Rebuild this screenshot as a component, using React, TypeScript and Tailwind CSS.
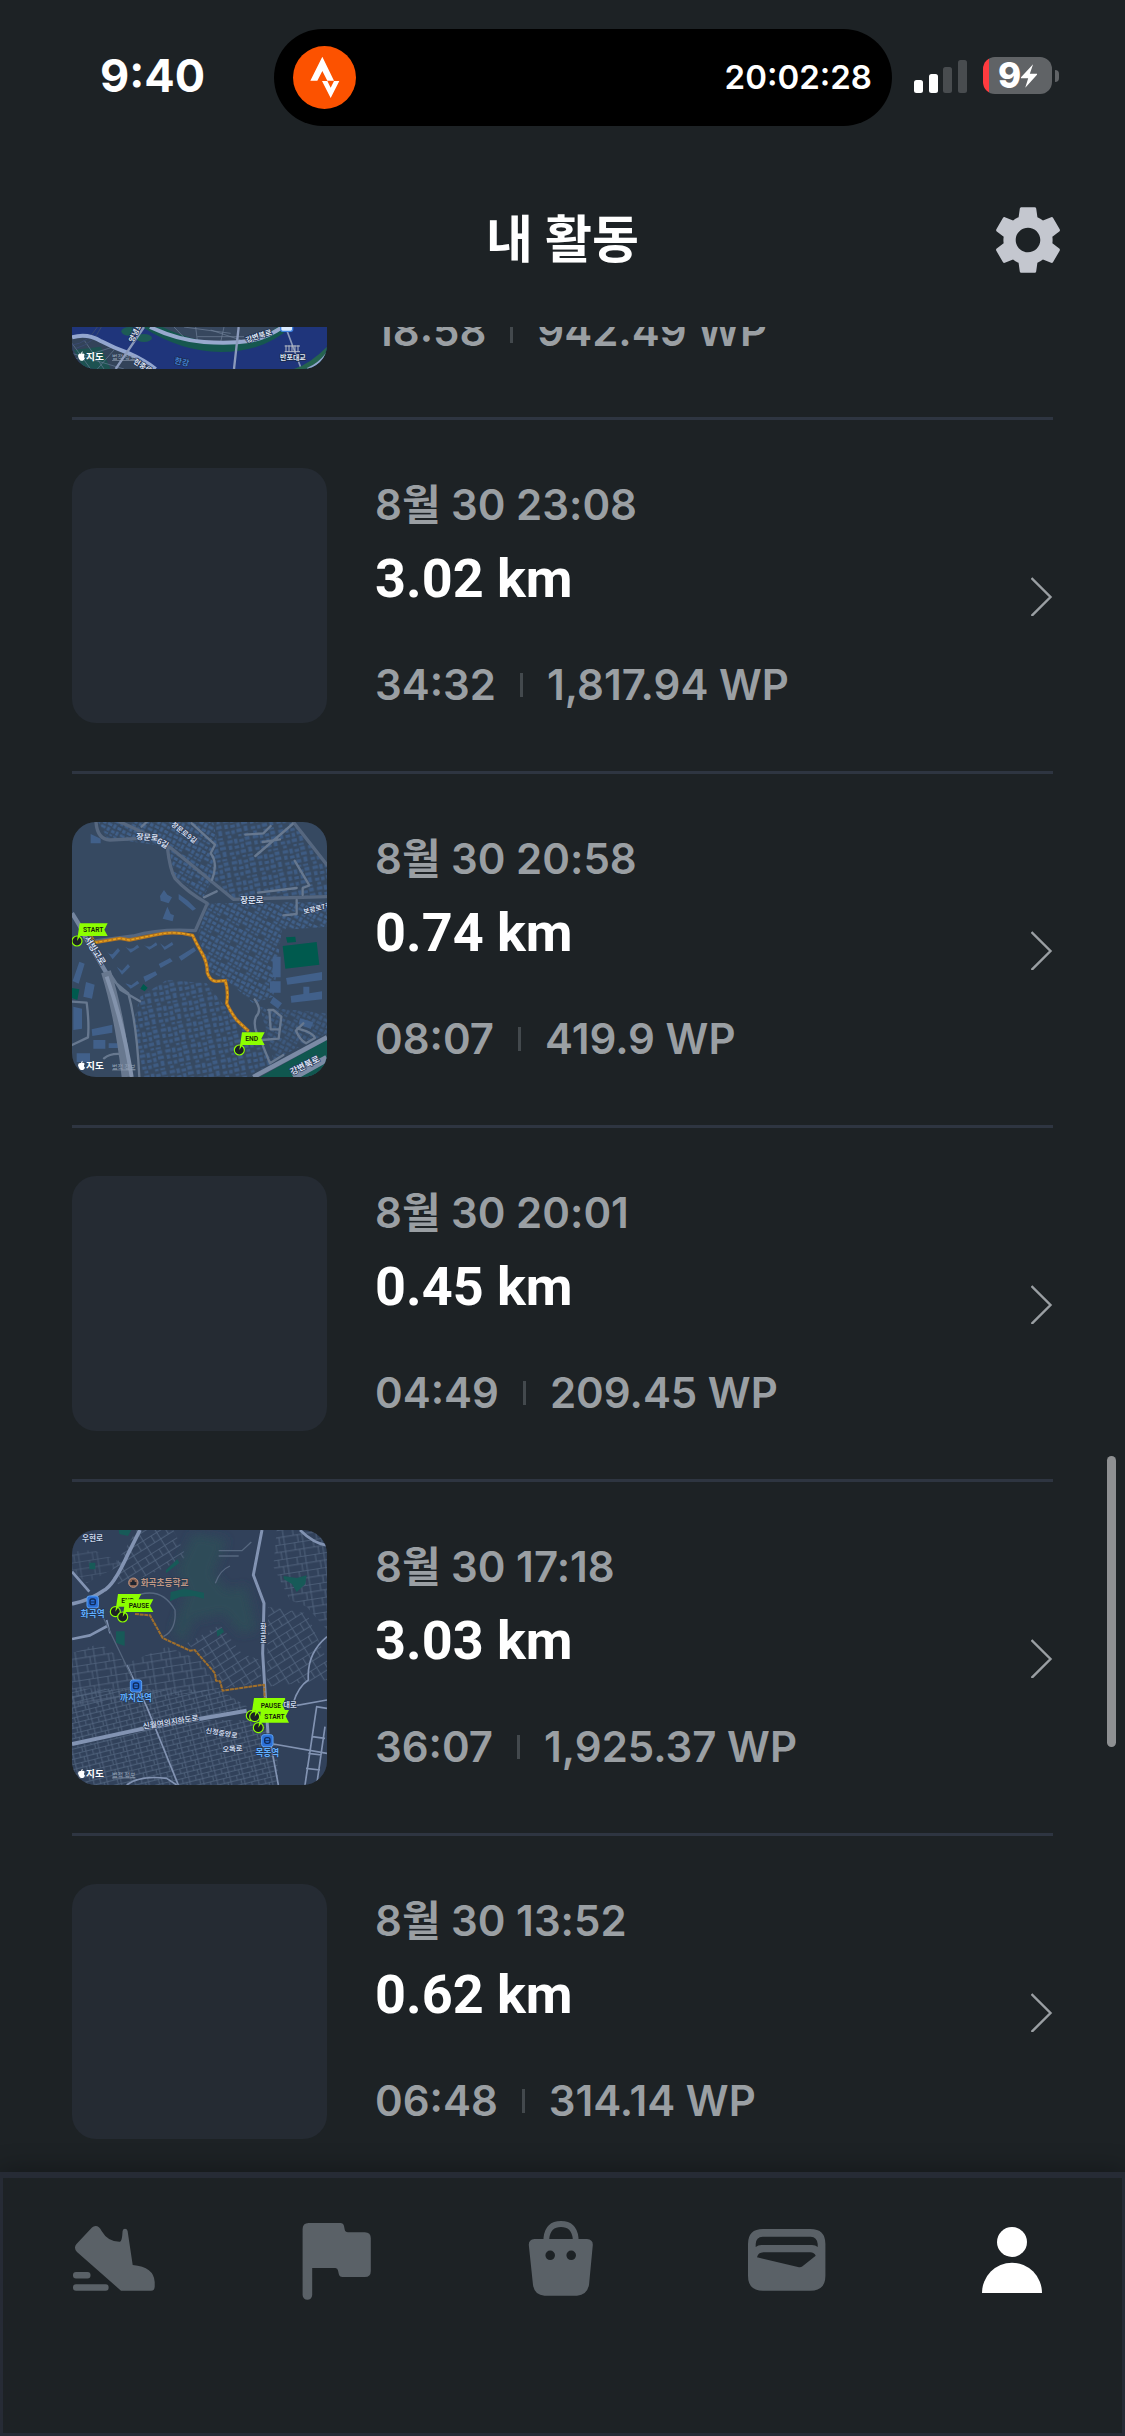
import { useLayoutEffect, useRef } from 'react'
import type { ReactNode } from 'react'
import { MdSettings } from 'react-icons/md'

type Activity = {
    date: string
    distance: string
    time: string
    points: string
    map?: ReactNode
}

const MAP_FONT = '"Noto Sans CJK KR", sans-serif'

const MapCredit = ({ x, y }: { x: number; y: number }) => (
    <g fill="#fff">
        <path d={`M${x} ${y - 10} q1 -9 9 -7 q1 -6 5 -7 q0 5 -3 7 q7 -2 9 3 q-5 6 1 11 q-4 9 -9 7 q-8 2 -12 -14Z`} />
        <text x={x + 24} y={y + 2} fontSize="29" fontWeight="700" fontFamily={MAP_FONT}>지도</text>
        <text x={x + 102} y={y} fontSize="18" fill="#93a1b5" textDecoration="underline" fontFamily={MAP_FONT}>법적 정보</text>
    </g>
)

const Flag = ({ x, y, label, width = 84 }: { x: number; y: number; label: string; width?: number }) => (
    <g>
        <circle cx={x} cy={y} r="15" fill="#1d2125" stroke="#8cff00" strokeWidth="3.5" />
        <path
            d={`M${x} ${y} L${x + 8} ${y - 53} h${width} l-10 19 l10 19 h${-width + 2} L${x} ${y}Z`}
            fill="#8cff00"
        />
        <text x={x + 18} y={y - 27} fontSize="20" fontWeight="600" fill="#16230a" fontFamily="Roboto, sans-serif">
            {label}
        </text>
    </g>
)

const Station = ({ x, y, label }: { x: number; y: number; label: string }) => (
    <g>
        <rect x={x - 17} y={y - 18} width="34" height="36" rx="7" fill="#2b6fd6" stroke="#5ba2f5" strokeWidth="3" />
        <rect x={x - 8} y={y - 9} width="16" height="17" rx="6" fill="none" stroke="#0f2c5c" strokeWidth="4" />
        <path d={`M${x - 8} ${y} h16`} stroke="#0f2c5c" strokeWidth="3" />
        <text
            x={x}
            y={y + 45}
            fontSize="26"
            fontWeight="700"
            textAnchor="middle"
            fill="#62b0ff"
            stroke="#1c3150"
            strokeWidth="3"
            paintOrder="stroke"
            fontFamily={MAP_FONT}
        >
            {label}
        </text>
    </g>
)

const RiverMap = () => (
    <svg viewBox="24 -618 765 765" className="size-full" aria-hidden="true">
        <rect x="24" y="-618" width="765" height="765" fill="#1f357b" />
        <path d="M24 50 Q70 42 110 66 L190 100 L275 147 H24Z" fill="#334359" />
        <path d="M30 90 L110 80 L140 147 H60Z" fill="#14594f" opacity=".7" />
        <path d="M24 70 L80 147 M24 120 L150 80 M60 60 L120 147 M24 100 L180 147 M100 147 L150 90" stroke="#667a96" strokeWidth="2" />
        <path d="M24 75 Q70 70 100 21 M36 85 Q90 70 112 21" stroke="#3a4a70" strokeWidth="3" fill="none" />
        <path d="M235 21 Q350 95 470 96 Q600 96 680 21 Z" fill="#16574f" />
        <path d="M295 21 Q390 66 470 68 Q580 66 640 21Z" fill="#37475e" />
        <path d="M330 21 L360 52 M360 21 L500 40 M395 21 L400 62 M440 30 L530 60 M480 21 L470 66 M400 50 H540" stroke="#73839b" strokeWidth="2" />
        <path d="M258 21 Q340 60 420 66 Q500 72 560 62 Q610 52 655 21" stroke="#98a9ce" strokeWidth="12" fill="none" />
        <ellipse cx="196" cy="34" rx="24" ry="13" fill="#1d5b55" />
        <ellipse cx="240" cy="54" rx="24" ry="12" fill="#1d5b55" />
        <path d="M24 52 Q70 38 112 64 Q150 84 190 98 Q240 120 275 147" stroke="#93a6cf" strokeWidth="12" fill="none" />
        <path d="M155 147 L240 21 M510 147 L524 21" stroke="#8b9abb" strokeWidth="7" />
        <path d="M668 30 L712 147" stroke="#8b9abb" strokeWidth="5" />
        <path d="M690 147 Q740 130 789 80 V147Z" fill="#25634f" />
        <path d="M730 147 Q765 132 789 100" stroke="#93a6cf" strokeWidth="6" fill="none" />
        <rect x="650" y="10" width="36" height="24" rx="6" fill="#dcecff" stroke="#3f82e0" strokeWidth="4" />
        <path d="M662 78 h46 M662 95 h46 M666 76 v20 M675 76 v20 M684 76 v20 M693 76 v20 M702 76 v20" stroke="#b5bac4" strokeWidth="3" />
        <g fontFamily={MAP_FONT} fontWeight="700" fill="#dfe6f3" stroke="#1c2a4c" strokeWidth="4" paintOrder="stroke">
            <text x="648" y="119" fontSize="21">반포대교</text>
            <text x="548" y="68" fontSize="22" transform="rotate(-18 548 68)">강변북로</text>
            <text x="208" y="68" fontSize="22" transform="rotate(-64 208 68)">양녕로</text>
            <text x="206" y="128" fontSize="22" transform="rotate(32 206 128)">현충로</text>
            <text x="330" y="130" fontSize="24" fill="#3f7fd0" transform="rotate(12 330 130)">한강</text>
        </g>
        <MapCredit x={42} y={118} />
    </svg>
)

const RouteMap = () => (
    <svg viewBox="36 36 765 765" className="size-full" aria-hidden="true">
        <defs>
            <pattern id="blocks" width="64" height="58" patternUnits="userSpaceOnUse" patternTransform="rotate(28)">
                <path
                    d="M2 3h13v10h-13z M19 2h9v14h-9z M33 4h15v9h-15z M52 6h9v8h-9z M3 21h10v10h-10z M18 21h14v8h-14z M36 18h9v13h-9z M50 20h12v9h-12z M2 36h15v8h-15z M22 34h9v12h-9z M37 37h11v9h-11z M52 34h8v13h-8z M19 50h13v6h-13z M37 51h9v5h-9z M50 51h11v5h-11z"
                    fill="#40608a"
                />
            </pattern>
            <pattern id="blocks-tilted" width="71" height="58" patternUnits="userSpaceOnUse" patternTransform="rotate(-12) scale(1.1)">
                <path
                    d="M2 3h15v9h-15z M21 2h9v13h-9z M35 6h12v8h-12z M51 2h13v10h-13z M3 18h9v11h-9z M19 21h12v8h-12z M36 19h9v11h-9z M50 17h16v9h-16z M2 36h12v8h-12z M19 36h9v10h-9z M33 35h14v9h-14z M54 31h10v14h-10z M6 49h10v7h-10z M35 50h9v6h-9z M49 51h14v5h-14z"
                    fill="#3e5c84"
                />
            </pattern>
        </defs>
        <rect x="36" y="36" width="765" height="765" fill="#364961" />
        <path d="M115 36 H460 L470 90 L466 190 L430 262 L345 200 L325 110 L140 84Z" fill="url(#blocks)" />
        <path d="M470 36 H700 L801 170 V255 L520 265 L460 210Z" fill="url(#blocks-tilted)" />
        <path d="M445 280 L801 275 V350 L665 360 L655 440 L640 560 L580 580 L500 510 L440 480 L415 370Z" fill="url(#blocks)" />
        <path d="M240 560 L320 510 L440 520 L495 590 L590 680 L640 760 L560 801 H245 L220 640Z" fill="url(#blocks-tilted)" />
        <path d="M600 590 L801 610 V670 L640 750Z" fill="url(#blocks)" opacity=".7" />
        <g fill="#41608a">
            <path d="M92 72 l30 14 v14 h-30z M312 240 l10 14 l14 8 l-10 18 l-24 -8 l-2 -14z M322 290 l10 22 l10 4 l-4 18 l-30 -8z M356 252 l28 20 l24 24 l-10 6 l-42 -34z" />
            <path d="M138 420 q10 16 20 12 l16 -18 l6 8 l-22 26z M196 410 q12 10 24 4 l12 -10 l6 8 l-26 16z M252 405 q12 8 22 2 l14 -10 l4 8 l-24 14z M300 400 l14 10 l22 -14 l4 8 l-26 16z M170 470 l16 12 l18 -20 l6 8 l-24 24z M356 440 l46 -28 l6 10 l-44 30z M296 462 l34 -18 l8 10 l-36 20z M196 520 l18 6 l18 -14 l6 8 l-26 16z M250 500 l36 -16 l6 10 l-36 22z" />
            <path d="M58 455 l16 6 l-18 60 l-18 -8z M78 516 l26 8 l-8 42 l-26 -6z M40 590 l26 6 v60 l-26 4z M95 658 l62 -14 v24 l-60 10z M100 690 h36 v26 h-36z M146 700 h40 v14 h-40z M50 730 h40 v26 h-40z" />
            <path d="M638 440 h24 v62 h-24z M630 514 h32 v34 h-32z M640 560 l26 20 l-12 16 l-24 -18z M678 504 l108 -18 v24 l-104 14z M692 558 l38 -6 v-22 h18 v20 l38 -6 v24 l-92 10z M720 625 l40 12 l-8 20 l-36 -14z" />
        </g>
        <g fill="none" stroke="#56677f" strokeWidth="10" strokeLinejoin="round" strokeLinecap="round">
            <path d="M108 36 Q112 88 150 90 L230 86 M180 36 Q260 70 330 112 L520 268 L801 260" />
            <path d="M322 112 Q330 180 345 205 Q380 245 442 280 L406 362 Q300 355 220 378 L110 392" />
            <path d="M700 36 L801 165" />
        </g>
        <g fill="none" stroke="#67788f" strokeWidth="7" strokeLinejoin="round" strokeLinecap="round">
            <path d="M395 40 L465 104 L452 130 Q475 160 456 210 M245 50 L260 36 M432 262 L470 244 M556 74 L610 70 L632 48 M660 88 L608 96 M698 42 L586 138 M704 152 L748 226 L728 234 V255 M594 248 L710 234 M710 270 V312 L670 316" />
            <path d="M625 600 H640 L664 620 L656 686 L606 690 M628 600 L632 658 H658 M584 568 Q608 600 588 620 Q575 650 606 700 L630 760 L670 735 M708 662 L730 640 M708 662 Q720 690 738 700 L765 684 Q760 668 712 655" />
            <path d="M36 575 L80 578 Q88 640 84 682 L36 705 M135 490 Q180 530 205 550 Q230 640 238 801 M150 490 L182 540 L240 574 M132 745 Q150 730 180 732" />
        </g>
        <path d="M36 310 Q60 345 75 380 L140 490" stroke="#74859f" strokeWidth="13" fill="none" />
        <path d="M138 485 Q180 620 200 801" stroke="#68788f" strokeWidth="30" fill="none" />
        <path d="M140 500 Q190 640 215 801" stroke="#8393ac" strokeWidth="12" fill="none" />
        <path d="M600 801 L801 690 V801Z" fill="#10574f" />
        <path d="M580 801 L801 682" stroke="#7b8ba5" strokeWidth="14" />
        <path d="M700 801 L801 745" stroke="#7b8ba5" strokeWidth="22" />
        <g fill="#005a4e">
            <path d="M668 408 L770 396 L778 464 L676 476Z M678 382 L706 380 L708 396 L682 398Z M250 522 L263 533 L254 544 L241 536Z M36 534 L58 538 L52 570 L36 564Z" />
        </g>
        <path
            d="M92 378 L104 398 L180 385 L208 390 L290 374 Q340 362 398 376 Q410 402 424 426 Q442 455 442 488 Q450 512 468 514 L496 512 Q506 545 500 580 Q510 602 530 630 L566 664"
            fill="none"
            stroke="#b8761c"
            strokeWidth="10"
            strokeLinejoin="round"
        />
        <path
            d="M104 398 L180 385 L208 390 L290 374 Q340 362 398 376 Q410 402 424 426 Q442 455 442 488 Q450 512 468 514 L496 512 Q506 545 500 580 Q510 602 530 630 L566 664"
            fill="none"
            stroke="#e8a51e"
            strokeWidth="4"
            strokeDasharray="9 5"
        />
        <g fontFamily={MAP_FONT} fontWeight="700" fill="#d5dff0" stroke="#2b3c55" strokeWidth="4" paintOrder="stroke">
            <text x="228" y="88" fontSize="24" transform="rotate(4 228 88)">장문로</text>
            <text x="288" y="98" fontSize="24" transform="rotate(30 288 98)">6길</text>
            <text x="332" y="46" fontSize="21" transform="rotate(38 332 46)">장문로9길</text>
            <text x="541" y="278" fontSize="25">장문로</text>
            <text x="732" y="312" fontSize="20" transform="rotate(-14 732 312)">보광로7길</text>
            <text x="72" y="386" fontSize="26" transform="rotate(58 72 386)">서빙고로</text>
            <text x="696" y="796" fontSize="26" transform="rotate(-27 696 796)">강변북로</text>
        </g>
        <Flag x={51} y={393} label="START" />
        <Flag x={538} y={720} label="END" width={68} />
        <MapCredit x={54} y={776} />
    </svg>
)

const CityMap = () => (
    <svg viewBox="36 30 765 765" className="size-full" aria-hidden="true">
        <defs>
            <pattern id="streets" width="56" height="44" patternUnits="userSpaceOnUse" patternTransform="rotate(-9)">
                <path d="M0 1 H56 M0 23 H56 M12 1 V23 M38 1 V44 M24 23 V44" stroke="#546680" strokeWidth="2.5" fill="none" />
            </pattern>
            <pattern id="streets-dense" width="40" height="30" patternUnits="userSpaceOnUse" patternTransform="rotate(-14)">
                <path d="M0 1 H40 M0 16 H40 M8 1 V16 M28 1 V30 M18 16 V30" stroke="#546680" strokeWidth="2.5" fill="none" />
            </pattern>
            <pattern id="streets-steep" width="48" height="46" patternUnits="userSpaceOnUse" patternTransform="rotate(-32)">
                <path d="M0 1 H48 M0 24 H48 M14 1 V24 M34 1 V46" stroke="#546680" strokeWidth="2.5" fill="none" />
            </pattern>
            <filter id="soft"><feGaussianBlur stdDeviation="14" /></filter>
        </defs>
        <rect x="36" y="30" width="765" height="765" fill="#31415a" />
        <g filter="url(#soft)" fill="#2f4b59">
            <path d="M400 40 L500 60 L460 160 L500 210 L560 200 L590 330 L540 340 L490 280 L400 300 L370 370 L340 330 L380 220 L350 150Z" />
        </g>
        <path d="M230 30 H340 L380 110 L300 150 L180 200 L150 160Z" fill="url(#streets-steep)" />
        <path d="M650 30 H801 V330 L740 260 L690 240 L640 140Z" fill="url(#streets)" />
        <path d="M625 260 L740 280 L801 420 V480 L620 500Z" fill="url(#streets-steep)" />
        <path d="M380 370 L480 315 L545 400 L600 420 L605 490 L490 505 L440 420Z" fill="url(#streets-steep)" />
        <path d="M36 400 L120 370 L200 430 L320 380 L420 420 L480 510 L36 560Z" fill="url(#streets)" />
        <path d="M36 505 L480 510 L570 565 L36 665Z" fill="url(#streets-dense)" />
        <path d="M36 680 L400 600 L600 600 L650 680 L655 795 H36Z" fill="url(#streets-dense)" />
        <path d="M36 95 L100 90 L190 130 L80 190 L36 150Z" fill="url(#streets)" opacity=".7" />
        <g fill="#175a58">
            <path d="M176 30 h38 l-10 18 l-26 -6z M318 150 l34 -32 l6 10 l-40 32z M670 168 l40 6 l30 -8 l-4 26 l-26 24 l-14 -24 l-24 -14z M332 216 l40 -10 l60 12 v18 l-30 -8 l-40 2 l-32 14z M470 332 l16 -8 l6 12 l-20 14z M168 334 h26 v44 l-26 -10z M88 128 h18 v20 h-18z" />
        </g>
        <path d="M476 92 h70 l28 -26 M476 108 h60 M466 190 Q480 150 510 138 M210 235 Q300 190 345 270 Q350 330 310 350" stroke="#56677f" strokeWidth="4" fill="none" />
        <g fill="none" stroke="#8293b2" strokeLinejoin="round">
            <path d="M240 30 L205 100 Q160 200 130 212 Q90 240 36 252" strokeWidth="11" />
            <path d="M606 30 L580 165 L612 250 L608 400 L618 560 L624 640" strokeWidth="9" />
            <path d="M36 672 L240 628 L560 572" strokeWidth="12" />
            <path d="M36 357 L90 346 L142 318 M720 30 Q760 70 801 76 M36 155 L88 215" strokeWidth="8" />
            <path d="M200 435 L260 560 L355 795 M630 660 L655 795 M640 672 L801 700 M690 560 L801 540 M700 548 Q715 500 745 480 Q740 400 801 350 M140 300 L150 340" strokeWidth="5" />
            <path d="M770 560 L735 795 M801 565 L768 560 M795 620 L770 795 M757 650 L795 655 M745 700 L785 705 M738 745 L780 750 M200 795 Q240 765 320 775 L350 795" strokeWidth="5" />
        </g>
        <path d="M100 230 L215 470" stroke="#54657d" strokeWidth="4" />
        <path
            d="M225 282 L270 286 L308 354 L390 392 L404 390 L465 460 L468 482 L480 484 L488 512 L612 494 L614 535"
            fill="none"
            stroke="#a06f2b"
            strokeWidth="6"
            strokeDasharray="12 2"
            strokeLinejoin="round"
        />
        <circle cx="220" cy="188" r="14" fill="#8a6353" stroke="#c09580" strokeWidth="3" />
        <path d="M211 195 v-9 h5 v-5 h8 v5 h5 v9z" fill="#1d2430" />
        <g fontFamily={MAP_FONT} fontWeight="700" fill="#ccd7eb" stroke="#28384f" strokeWidth="4" paintOrder="stroke">
            <text x="242" y="198" fontSize="26" fill="#c09885">화곡초등학교</text>
            <text x="66" y="62" fontSize="23">우현로</text>
            <text x="250" y="627" fontSize="23" transform="rotate(-9 250 627)">신월여의지하도로</text>
            <text x="436" y="638" fontSize="21" transform="rotate(10 436 638)">신정중앙로</text>
            <text x="488" y="697" fontSize="22" transform="rotate(-5 488 697)">오목로</text>
            <text x="670" y="561" fontSize="22">대로</text>
            <text x="601" y="328" fontSize="20">화</text>
            <text x="601" y="347" fontSize="20">곡</text>
            <text x="601" y="366" fontSize="20">로</text>
        </g>
        <Station x={98} y={246} label="화곡역" />
        <Station x={228} y={498} label="까치산역" />
        <Station x={622} y={662} label="목동역" />
        <Flag x={166} y={275} label="END" width={70} />
        <Flag x={188} y={291} label="PAUSE" />
        <Flag x={574} y={587} label="" width={94} />
        <Flag x={584} y={590} label="PAUSE" />
        <Flag x={595} y={623} label="START" />
        <MapCredit x={54} y={770} />
    </svg>
)

const activities: Activity[] = [
    { date: '8월 31 19:26', distance: '1.57 km', time: '18:58', points: '942.49 WP', map: <RiverMap /> },
    { date: '8월 30 23:08', distance: '3.02 km', time: '34:32', points: '1,817.94 WP' },
    { date: '8월 30 20:58', distance: '0.74 km', time: '08:07', points: '419.9 WP', map: <RouteMap /> },
    { date: '8월 30 20:01', distance: '0.45 km', time: '04:49', points: '209.45 WP' },
    { date: '8월 30 17:18', distance: '3.03 km', time: '36:07', points: '1,925.37 WP', map: <CityMap /> },
    { date: '8월 30 13:52', distance: '0.62 km', time: '06:48', points: '314.14 WP' },
]

const StatusBar = () => (
    <div className="flex items-center pt-[29px] text-white">
        <div className="w-[274px] pb-1 pl-[100px] text-[45px] leading-none font-bold">9:40</div>
        <div className="flex h-[97px] flex-1 items-center justify-between rounded-full bg-black pr-5 pl-[19px]">
            <svg viewBox="39 48 189 189" className="size-[63px]" aria-label="Strava">
                <circle cx="133.5" cy="142.5" r="94.5" fill="#fc5200" />
                <path d="M127 80 L91 152 H112 L127 123 L142 152 H162Z M126 153 H142 L152 173 L162 153 H178 L152 204Z" fill="#fff" />
            </svg>
            <span className="text-[33px] leading-none font-semibold">20:02:28</span>
        </div>
        <div className="flex w-[233px] items-center gap-4 pb-1 pl-[22px]">
            <svg viewBox="0 0 53 34" className="h-[34px] w-[53px]" aria-hidden="true">
                <rect x="0" y="21" width="9" height="13" rx="2.5" fill="#fff" />
                <rect x="15" y="15" width="9" height="19" rx="2.5" fill="#fff" />
                <rect x="29" y="8" width="9" height="26" rx="2.5" fill="#484c4f" />
                <rect x="44" y="1" width="9" height="33" rx="2.5" fill="#484c4f" />
            </svg>
            <div className="flex items-center gap-[3px]">
                <div className="flex h-[37px] w-[69px] items-center rounded-xl bg-[linear-gradient(90deg,#ff3b3f_6px,#606366_6px)] pl-[15px]">
                    <span className="text-[35px] leading-none font-extrabold">9</span>
                    <svg viewBox="1262 190 49 72" className="h-6 w-4" aria-hidden="true">
                        <path d="M1299 190 L1262 230 V233 H1284 L1275 262 L1311 222 V219 H1289Z" fill="#fff" />
                    </svg>
                </div>
                <div className="h-3 w-1 rounded-r-full bg-[#606366]"></div>
            </div>
        </div>
    </div>
)

const ActivityRow = ({ activity }: { activity: Activity }) => (
    <li className="border-b-3 border-[#2e3541]">
        <a href="#activity" className="flex items-center py-12">
            <div className="size-[255px] shrink-0 overflow-hidden rounded-3xl bg-[#252b33]">{activity.map}</div>
            <div className="ml-12 flex h-[255px] flex-1 flex-col text-[42px] font-semibold text-[#9a9fa3]">
                <p className="mt-[9px] leading-[56px]">{activity.date}</p>
                <p className="mt-3 font-[Roboto,sans-serif] text-[54px] leading-[68px] font-bold text-white">
                    {activity.distance}
                </p>
                <div className="mt-10 flex items-center leading-[64px]">
                    <span>{activity.time}</span>
                    <span className="mx-6 h-6 w-[3px] bg-[#43494d]"></span>
                    <span>{activity.points}</span>
                </div>
            </div>
            <svg viewBox="0 0 22 40" className="h-10 w-[22px]" fill="none" stroke="#9a9fa3" strokeWidth="2.4" aria-hidden="true">
                <path d="M0.5 2 L19.5 21 L0.5 40" />
            </svg>
        </a>
    </li>
)

const tabs = [
    {
        name: 'Walk',
        icon: (
            <>
                <path d="M19 7.5 L3.5 24 Q0.2 28 4 32 L48 70.7 H78 Q81.7 70.7 81.7 66.5 V62 Q81 47 59.7 45 L54.6 11 Q54 8.7 52 8.7 Q50 8.7 49.6 11 Q49 21.7 47 21.7 Q35 22 28.6 11 Q26 5.8 22.5 6 Q20.5 6.2 19 7.5Z" />
                <rect x="0" y="52" width="17.5" height="6.5" rx="3" />
                <rect x="0" y="64.2" width="35.6" height="6.5" rx="3" />
            </>
        ),
    },
    {
        name: 'Goals',
        icon: (
            <path d="M5.6 9 Q5.6 3 11.6 3 H43.4 Q46.4 3 47 6 L47.7 9.5 Q48.2 12.3 50.9 12.3 H67.8 Q73.8 12.3 73.8 18.3 V51 Q73.8 57 67.8 57 H45.4 Q42.4 57 41.8 54 L41 50.5 Q40.6 48 38.4 48 H15.2 V75 a4.8 4.8 0 0 1 -9.6 0Z" />
        ),
    },
    {
        name: 'Shop',
        icon: (
            <>
                <path d="M26.4 20 V18 Q28 4 41 4 Q54 4 55.6 18 V20" fill="none" stroke="currentColor" strokeWidth="5.8" />
                <path
                    fillRule="evenodd"
                    d="M14.5 19 H67 Q73 19.5 72.8 25 L69 65 Q67 75 57 75.7 H24.5 Q14.5 75 13 65 L8.8 25 Q8.6 19.5 14.5 19Z M25.4 35.3 a4.8 4.8 0 1 0 9.6 0 a4.8 4.8 0 1 0 -9.6 0Z M46.4 35.3 a4.8 4.8 0 1 0 9.6 0 a4.8 4.8 0 1 0 -9.6 0Z"
                />
            </>
        ),
    },
    {
        name: 'Wallet',
        icon: (
            <path
                fillRule="evenodd"
                d="M19 9 H66.4 Q81.4 9 81.4 24 V55.7 Q81.4 70.7 66.4 70.7 H19 Q4 70.7 4 55.7 V24 Q4 9 19 9Z M11.7 27 Q14 25 17.5 25 H68 Q71.5 25 73.7 27 V24 Q73 17 66.7 16.7 H18.7 Q12 17 11.7 24Z M13 37.3 L55 47.3 Q57 47.6 58.5 46.3 L71.7 35.7 Q70.5 32.5 66 32.3 H19.5 Q14 32.5 13 37.3Z"
            />
        ),
    },
    {
        name: 'Profile',
        active: true,
        icon: (
            <>
                <circle cx="44" cy="22" r="15" />
                <path d="M14 73 A30 30.3 0 0 1 74 73Z" />
            </>
        ),
    },
]

const App = () => {
    const listRef = useRef<HTMLUListElement>(null)

    useLayoutEffect(() => {
        if (listRef.current) listRef.current.scrollTop = 261
    }, [])

    return (
        <div className="flex h-screen flex-col bg-[#1d2225] font-[Inter,'Noto_Sans_CJK_KR',sans-serif]">
            <StatusBar />

            <header className="grid grid-cols-[1fr_auto_1fr] items-center px-14 pt-[72px] pb-[45px]">
                <h1 className="col-start-2 text-[51px] leading-[84px] font-bold text-white">내 활동</h1>
                <button aria-label="Settings" className="justify-self-end text-[#c4c7cf]">
                    <MdSettings className="size-[82px]" />
                </button>
            </header>

            <main className="relative min-h-0 flex-1">
                <ul ref={listRef} className="h-full overflow-y-auto px-[72px] [scrollbar-width:none]">
                    {activities.map((activity) => (
                        <ActivityRow key={activity.date} activity={activity} />
                    ))}
                </ul>
                {/* Scroll indicator */}
                <div className="absolute top-[1129px] right-[9px] h-[291px] w-[9px] rounded-full bg-[#8e9092]"></div>
            </main>

            <nav className="relative border-t-3 border-[#262b35] bg-[#1d2225] shadow-[0_-2px_24px_rgba(0,0,0,0.3)]">
                <div className="grid h-[261px] grid-cols-5 border-3 border-[#262b35] pt-[42px]">
                    {tabs.map((tab) => (
                        <button
                            key={tab.name}
                            aria-label={tab.name}
                            className={`flex items-start justify-center ${tab.active ? 'text-white' : 'text-[#5a6167]'}`}
                        >
                            <svg viewBox="0 0 84 84" className="size-[84px]" fill="currentColor">
                                {tab.icon}
                            </svg>
                        </button>
                    ))}
                </div>
            </nav>
        </div>
    )
}

export default App
